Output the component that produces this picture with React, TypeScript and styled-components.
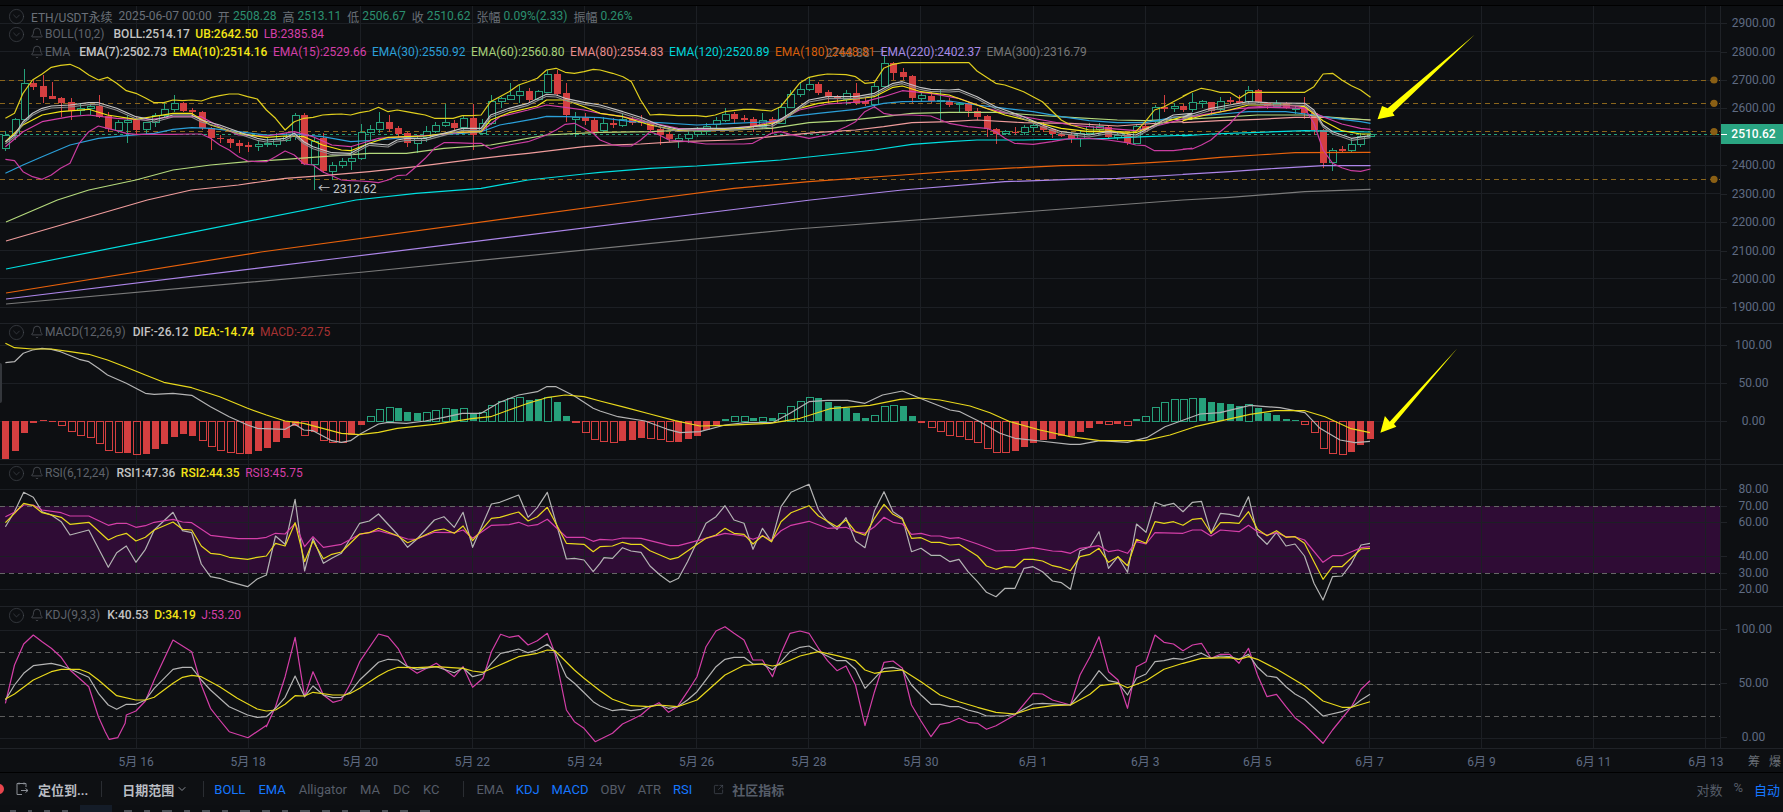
import React from "react";
import styled, { createGlobalStyle } from "styled-components";
import { Bell, ChevronDown, CircleChevronDown, SquareArrowOutUpRight } from "lucide-react";

type Pt = [number, number];
// bodyTop, bodyBottom, wickTop, wickBottom, colour - read off the chart, 3 units = 1px
type Candle = [number, number, number, number, "r" | "g"];
// bar end (3 units = 1px, zero line at 303), hollow flag
type Bar = [number, 0 | 1];

const GREEN = "#26a17b";
const RED = "#d43f40";
const BG = "#0d0f12";
const GRID = "#1c1f24";

const GlobalStyle = createGlobalStyle`
  html, body {
    margin: 0;
    padding: 0;
    background: ${BG};
    overflow: hidden;
  }
  body {
    font-family: Roboto, "Noto Sans CJK SC", sans-serif;
    font-size: 12px;
  }
`;

const Page = styled.div`
  width: 1783px;
  height: 812px;
  background: ${BG};
  overflow: hidden;
  display: flex;
  flex-direction: column;
`;

const TopEdge = styled.div`
  height: 6px;
  flex: none;
  box-sizing: border-box;
  background: #0a0b0d;
  border-bottom: 1px solid #000;
`;

const PaneRow = styled.section<{ $h: number }>`
  height: ${(p) => p.$h}px;
  flex: none;
  box-sizing: border-box;
  display: flex;
  border-bottom: 1px solid #1f2227;
`;

const ChartArea = styled.div`
  width: 1720px;
  flex: none;
  position: relative;
  overflow: hidden;
`;

const ChartSvg = styled.svg`
  display: block;
  width: 1720px;
  height: 100%;
`;

const PriceAxis = styled.div`
  flex: 1;
  position: relative;
  box-sizing: border-box;
  border-left: 1px solid #1f2227;
`;

const Tick = styled.div<{ $y: number }>`
  position: absolute;
  left: 0;
  right: 0;
  top: ${(p) => p.$y - 8}px;
  height: 16px;
  line-height: 16px;
  padding-left: 3px;
  text-align: center;
  color: #5f6b82;
  &::before {
    content: "";
    position: absolute;
    left: 0;
    top: 8px;
    width: 6px;
    height: 1px;
    background: #1f2227;
  }
`;

const LastPrice = styled.div<{ $y: number }>`
  position: absolute;
  left: 0;
  right: 0;
  top: ${(p) => p.$y - 10}px;
  height: 20px;
  line-height: 20px;
  padding-left: 3px;
  text-align: center;
  font-weight: 500;
  color: #fff;
  background: #2aa582;
  &::before {
    content: "";
    position: absolute;
    left: 0;
    top: 10px;
    width: 6px;
    height: 1px;
    background: #fff;
  }
`;

const Legend = styled.div<{ $pad: number }>`
  position: absolute;
  left: 9px;
  top: ${(p) => p.$pad}px;
  display: flex;
  flex-direction: column;
`;

const LegendRow = styled.div<{ $h: number }>`
  display: flex;
  align-items: center;
  height: ${(p) => p.$h}px;
  white-space: nowrap;
`;

const Toggle = styled.span<{ $hidden?: boolean }>`
  width: 15px;
  height: 15px;
  flex: none;
  margin-right: 7px;
  color: #474b52;
  visibility: ${(p) => (p.$hidden ? "hidden" : "visible")};
  svg {
    display: block;
    margin: -1px;
  }
`;

const BellMark = styled.span`
  width: 12px;
  height: 14px;
  flex: none;
  margin-right: 2px;
  color: #5f636b;
  svg {
    display: block;
    margin: 0 -1px;
  }
`;

const IndicatorName = styled.span<{ $gap: number }>`
  color: #5f636b;
  margin-right: ${(p) => p.$gap}px;
`;

const Value = styled.span<{ $c: string; $bold?: boolean }>`
  color: ${(p) => p.$c};
  font-weight: ${(p) => (p.$bold ? 500 : 400)};
  margin-right: 5.5px;
`;

const QuoteLabel = styled.span`
  color: #6a6f78;
  margin-right: 3px;
`;

const QuoteName = styled.span`
  color: #6a6f78;
  margin-right: 6px;
`;

const QuoteValue = styled.span`
  color: #2b8f70;
  margin-right: 6px;
`;

const PriceMark = styled.div<{ $x: number; $y: number; $c: string }>`
  position: absolute;
  left: ${(p) => p.$x}px;
  top: ${(p) => p.$y - 8}px;
  line-height: 16px;
  white-space: nowrap;
  color: ${(p) => p.$c};
`;

const PaneHandle = styled.div`
  position: absolute;
  left: 0;
  top: 39px;
  width: 2px;
  height: 40px;
  border-radius: 0 2px 2px 0;
  background: #34373c;
`;

const TimeRow = styled.div`
  height: 24px;
  flex: none;
  box-sizing: border-box;
  display: flex;
  border-bottom: 1px solid #000;
`;

const TimeScale = styled.div`
  width: 1720px;
  flex: none;
  box-sizing: border-box;
  padding-left: 80px;
  display: grid;
  grid-template-columns: repeat(15, 112.14px);
  align-items: center;
  color: #5f6b82;
  font-size: 12px;
  text-align: center;
  white-space: nowrap;
`;

const ScaleCorner = styled.div`
  flex: 1;
  display: flex;
  justify-content: flex-end;
  align-items: center;
  gap: 9px;
  padding-right: 2px;
  color: #6a6f78;
  font-size: 12px;
`;

const Toolbar = styled.div`
  height: 32px;
  flex: none;
  display: flex;
  align-items: center;
  background: #0e1013;
  font-size: 13px;
`;

const AlertDot = styled.span`
  width: 10px;
  height: 10px;
  flex: none;
  margin-left: -6px;
  margin-right: 11px;
  border-radius: 50%;
  background: #e8454d;
`;

const LocateIcon = styled.svg`
  width: 14px;
  height: 14px;
  flex: none;
  margin-right: 9px;
`;

const StrongLabel = styled.span`
  color: #b9bcc2;
  font-weight: 700;
  font-size: 13px;
`;

const RangeCaret = styled(ChevronDown)`
  flex: none;
  margin-left: 2px;
  color: #8b8f96;
`;

const Divider = styled.span<{ $l: number; $r: number }>`
  width: 1px;
  height: 16px;
  flex: none;
  margin: 0 ${(p) => p.$r}px 0 ${(p) => p.$l}px;
  background: #2a2d32;
`;

const ToolGroup = styled.div<{ $gap: number }>`
  display: flex;
  gap: ${(p) => p.$gap}px;
`;

const ToolItem = styled.span<{ $on?: boolean }>`
  color: ${(p) => (p.$on ? "#1677ff" : "#565d69")};
`;

const CommunityLink = styled.span`
  display: flex;
  align-items: center;
  gap: 8px;
  margin-left: 21px;
  color: #565d69;
  font-weight: 700;
  font-size: 13px;
`;

const ToolEnd = styled.div`
  margin-left: auto;
  display: flex;
  gap: 11px;
  padding-right: 3px;
  color: #565d69;
`;

const BottomStrip = styled.div`
  flex: 1;
  display: flex;
  align-items: flex-end;
  gap: 12px;
  padding-left: 10px;
  overflow: hidden;
`;

const Speck = styled.span<{ $on?: boolean; $w: number }>`
  width: ${(p) => p.$w}px;
  height: ${(p) => (p.$on ? 7 : 2)}px;
  flex: none;
  background: ${(p) => (p.$on ? "#141c28" : "#4a4e55")};
`;

// chart helpers
const seg = (x0: number, y0: number, sx: number, pts: Pt[]): Pt[] =>
  pts.map(([px, py]) => [x0 + px * sx, y0 + py / 3]);
const z1 = (y0: number, pts: Pt[]) => seg(0, y0, 0.3827, pts);
const z2 = (pts: Pt[]) => seg(600, 0, 0.3827, pts);
const z3 = (pts: Pt[]) => seg(1183, 0, 0.3827, pts);
const half = (y0: number, pts: Pt[]) => seg(600, y0, 0.5, pts);
const low = (pts: Pt[]) => seg(0, 710, 0.574, pts);
const toPoints = (pts: Pt[]) => pts.map(([x, y]) => `${x.toFixed(1)},${y.toFixed(1)}`).join(" ");
const candleX = (i: number) => 5.4 + 9.345 * i;

const GRID_X = Array.from({ length: 15 }, (_, k) => 136 + 112.14 * k);
const TIME_LABELS = ["5月 16", "5月 18", "5月 20", "5月 22", "5月 24", "5月 26", "5月 28", "5月 30", "6月 1", "6月 3", "6月 5", "6月 7", "6月 9", "6月 11", "6月 13"];

const CANDLES: Candle[] = [
  [405, 445, 392, 452, "g"], [358, 405, 355, 420, "g"], [250, 358, 208, 358, "g"], [250, 260, 240, 270, "r"],
  [258, 290, 225, 310, "r"], [288, 296, 245, 298, "r"], [295, 310, 290, 350, "r"], [307, 332, 295, 360, "r"],
  [325, 332, 310, 345, "g"], [320, 325, 315, 345, "g"], [318, 350, 285, 355, "r"], [348, 388, 335, 395, "r"],
  [367, 390, 360, 398, "g"], [360, 367, 345, 430, "g"], [360, 390, 350, 405, "r"], [368, 388, 365, 405, "g"],
  [345, 368, 340, 380, "g"], [327, 345, 305, 350, "g"], [310, 327, 285, 335, "g"], [310, 332, 305, 335, "r"],
  [330, 337, 325, 350, "r"], [335, 383, 333, 390, "r"], [383, 415, 380, 450, "r"], [413, 418, 405, 430, "r"],
  [418, 430, 415, 445, "r"], [428, 437, 420, 458, "r"], [435, 440, 425, 455, "r"], [432, 438, 420, 452, "g"],
  [429, 433, 415, 440, "g"], [418, 432, 400, 440, "g"], [410, 420, 400, 425, "g"], [346, 410, 338, 420, "g"],
  [345, 493, 340, 495, "r"], [425, 493, 415, 570, "g"], [415, 513, 400, 520, "r"], [497, 513, 485, 540, "g"],
  [484, 497, 475, 505, "g"], [475, 484, 440, 510, "g"], [398, 475, 372, 480, "g"], [388, 397, 375, 420, "g"],
  [367, 388, 335, 400, "g"], [367, 388, 345, 395, "r"], [384, 402, 378, 415, "r"], [400, 430, 395, 440, "r"],
  [415, 430, 405, 460, "g"], [395, 412, 378, 425, "g"], [375, 395, 365, 400, "g"], [368, 375, 312, 380, "g"],
  [369, 384, 360, 390, "r"], [355, 382, 345, 395, "g"], [354, 405, 313, 450, "r"], [370, 400, 358, 405, "g"],
  [305, 370, 285, 375, "g"], [295, 305, 290, 325, "g"], [287, 298, 250, 300, "g"], [273, 287, 255, 310, "g"],
  [273, 300, 265, 305, "r"], [275, 298, 270, 300, "g"], [222, 277, 210, 280, "g"], [222, 282, 210, 285, "r"],
  [280, 345, 250, 365, "r"], [353, 358, 335, 410, "g"], [352, 362, 340, 375, "r"], [360, 395, 350, 405, "r"],
  [370, 392, 350, 395, "g"], [368, 375, 355, 385, "r"], [358, 375, 340, 380, "g"], [358, 370, 350, 375, "r"],
  [362, 370, 345, 378, "r"], [368, 390, 362, 400, "r"], [388, 405, 380, 435, "r"], [403, 418, 395, 425, "r"],
  [415, 420, 405, 445, "g"], [403, 415, 390, 430, "g"], [393, 403, 380, 410, "g"], [380, 393, 370, 405, "g"],
  [362, 372, 350, 385, "g"], [343, 362, 325, 365, "g"], [343, 358, 335, 370, "r"], [353, 360, 345, 365, "r"],
  [358, 380, 350, 395, "r"], [360, 380, 340, 385, "g"], [358, 370, 350, 400, "r"], [323, 370, 308, 372, "g"],
  [283, 323, 270, 325, "g"], [268, 283, 250, 290, "g"], [253, 268, 232, 272, "g"], [253, 278, 245, 285, "r"],
  [277, 292, 270, 308, "r"], [290, 298, 285, 310, "r"], [280, 297, 270, 315, "g"], [280, 308, 250, 315, "r"],
  [303, 313, 295, 318, "r"], [260, 313, 250, 325, "g"], [190, 260, 165, 262, "g"], [190, 218, 185, 240, "r"],
  [217, 232, 205, 240, "r"], [228, 293, 225, 310, "r"], [287, 294, 275, 305, "g"], [287, 303, 275, 310, "r"],
  [300, 303, 270, 365, "g"], [303, 315, 295, 320, "r"], [310, 313, 305, 335, "g"], [310, 333, 305, 350, "r"],
  [332, 350, 325, 360, "r"], [348, 388, 345, 410, "r"], [388, 403, 385, 432, "r"], [395, 400, 390, 405, "g"],
  [395, 397, 380, 405, "r"], [382, 397, 375, 405, "g"], [377, 382, 370, 395, "g"], [378, 390, 365, 395, "r"],
  [388, 403, 385, 415, "r"], [402, 407, 395, 410, "r"], [405, 415, 400, 430, "r"], [400, 415, 390, 440, "g"],
  [378, 400, 370, 405, "g"], [378, 388, 370, 395, "g"], [380, 412, 375, 415, "r"], [405, 412, 395, 420, "g"],
  [405, 430, 400, 435, "r"], [378, 430, 372, 432, "g"], [378, 390, 360, 395, "r"], [323, 365, 315, 370, "g"],
  [320, 328, 285, 335, "r"], [320, 325, 310, 335, "g"], [318, 329, 312, 335, "r"], [308, 328, 280, 335, "g"],
  [305, 310, 300, 325, "g"], [307, 332, 305, 345, "r"], [305, 328, 292, 335, "g"], [300, 305, 290, 312, "r"],
  [304, 310, 285, 312, "r"], [271, 305, 258, 310, "g"], [271, 305, 268, 310, "r"], [308, 318, 305, 328, "r"],
  [310, 318, 300, 325, "g"], [310, 325, 305, 328, "r"], [325, 328, 318, 342, "g"], [322, 340, 292, 358, "r"],
  [340, 390, 335, 405, "r"], [390, 488, 388, 503, "r"], [452, 488, 445, 512, "g"], [447, 452, 438, 455, "r"],
  [433, 452, 418, 455, "g"], [410, 433, 400, 440, "g"], [403, 408, 398, 410, "g"],
];

const MACD_BARS: Bar[] = [
  [418, 0], [392, 0], [338, 0], [308, 0], [300, 0], [307, 0], [316, 1], [334, 1], [346, 1], [352, 1], [370, 1], [392, 1],
  [397, 1], [398, 0], [403, 1], [401, 0], [386, 0], [371, 0], [352, 0], [342, 0], [348, 0], [361, 1], [380, 1], [392, 1],
  [397, 1], [401, 1], [401, 0], [392, 0], [383, 0], [365, 0], [353, 0], [318, 0], [347, 1], [337, 0], [361, 1], [368, 1],
  [368, 1], [345, 0], [315, 0], [290, 1], [268, 1], [262, 1], [264, 0], [276, 0], [279, 0], [277, 1], [271, 1], [265, 1],
  [267, 0], [265, 1], [278, 0], [278, 1], [256, 1], [245, 1], [235, 1], [232, 1], [240, 0], [238, 0], [232, 1], [245, 0],
  [288, 0], [307, 1], [337, 1], [358, 1], [365, 1], [368, 1], [362, 0], [359, 0], [353, 0], [356, 1], [358, 1], [365, 1],
  [365, 0], [358, 0], [347, 0], [330, 0], [315, 0], [298, 0], [290, 1], [290, 1], [295, 0], [293, 1], [295, 0], [281, 1],
  [260, 1], [244, 1], [232, 1], [234, 0], [246, 0], [258, 0], [263, 0], [279, 0], [294, 0], [287, 1], [260, 1], [256, 1],
  [258, 0], [288, 0], [308, 0], [322, 1], [334, 1], [346, 1], [350, 1], [358, 1], [368, 1], [386, 1], [398, 1], [398, 1],
  [393, 0], [380, 0], [368, 0], [360, 0], [356, 0], [349, 0], [347, 0], [335, 0], [323, 0], [311, 0], [314, 1], [311, 0],
  [316, 1], [298, 0], [290, 1], [262, 1], [247, 1], [238, 1], [238, 1], [235, 1], [234, 0], [246, 0], [250, 0], [253, 0],
  [258, 0], [253, 1], [264, 0], [279, 0], [286, 0], [298, 0], [300, 0], [313, 1], [338, 1], [386, 1], [400, 1], [404, 1],
  [396, 0], [374, 0], [356, 0],
];

const UB: Pt[] = [
  ...z1(0, [[14, 355], [38, 340], [60, 280], [85, 240], [110, 222], [134, 202], [158, 196], [183, 193], [207, 205], [232, 225], [257, 240], [281, 232], [305, 250], [330, 272], [355, 280], [379, 293], [403, 308], [428, 308], [452, 300], [477, 302], [501, 300], [526, 303], [550, 293], [574, 287], [599, 282], [623, 282], [647, 290], [672, 297], [696, 330], [720, 355], [745, 390], [769, 365], [794, 355], [818, 352], [843, 345], [867, 343], [892, 342], [916, 345], [940, 338], [965, 333], [989, 322], [1014, 335], [1038, 330], [1062, 335], [1087, 340], [1111, 345], [1135, 355], [1160, 355], [1184, 355], [1208, 347], [1233, 347], [1257, 345], [1282, 305], [1306, 290], [1330, 275], [1355, 255], [1380, 245], [1404, 235], [1428, 210], [1453, 205], [1477, 217], [1501, 220], [1526, 215], [1550, 208], [1568, 210]]),
  ...z2([[33, 220], [60, 230], [82, 245], [106, 300], [131, 345], [155, 343], [204, 347], [253, 347], [277, 350], [301, 345], [326, 335], [375, 328], [399, 328], [448, 333], [472, 320], [497, 285], [521, 250], [546, 232], [570, 226], [594, 222], [643, 224], [668, 230], [692, 250], [717, 247], [741, 205], [766, 193], [790, 188], [964, 188], [985, 213], [1034, 250], [1058, 255], [1107, 275], [1156, 305], [1205, 360], [1230, 375], [1278, 390], [1327, 390], [1376, 400], [1400, 395], [1425, 365], [1449, 330], [1474, 320], [1498, 305], [1523, 290], [1547, 275]]),
  ...z3([[0, 288], [24, 275], [48, 265], [73, 270], [97, 277], [122, 277], [147, 295], [171, 277], [195, 277], [318, 277], [342, 260], [366, 222], [391, 220], [415, 240], [440, 257], [464, 270], [490, 292]]),
];

const LB: Pt[] = [
  ...z1(0, [[14, 478], [38, 482], [60, 515], [85, 530], [110, 538], [134, 525], [158, 505], [183, 490], [207, 430], [232, 395], [257, 378], [281, 385], [305, 392], [330, 400], [355, 403], [403, 403], [452, 403], [500, 402], [526, 402], [550, 415], [574, 435], [599, 450], [623, 470], [647, 483], [672, 485], [696, 485], [720, 470], [745, 453], [769, 465], [794, 492], [818, 495], [843, 515], [867, 527], [892, 540], [916, 542], [940, 543], [965, 545], [989, 548], [1014, 540], [1038, 527], [1062, 525], [1087, 500], [1111, 475], [1135, 445], [1160, 428], [1184, 428], [1233, 430], [1257, 430], [1282, 447], [1306, 440], [1330, 435], [1380, 425], [1428, 405], [1453, 390], [1477, 373], [1501, 370], [1526, 385], [1550, 400], [1568, 420]]),
  ...z2([[33, 435], [57, 438], [82, 438], [106, 420], [131, 395], [155, 405], [180, 420], [228, 425], [277, 432], [326, 432], [375, 432], [399, 430], [424, 415], [448, 400], [472, 395], [497, 403], [546, 415], [594, 405], [643, 380], [668, 365], [692, 335], [717, 320], [741, 340], [766, 345], [815, 345], [864, 348], [912, 370], [961, 380], [1010, 385], [1034, 395], [1058, 415], [1083, 430], [1132, 433], [1181, 425], [1230, 415], [1278, 415], [1327, 420], [1376, 428], [1400, 435], [1425, 437], [1449, 452], [1498, 452], [1547, 445]]),
  ...z3([[0, 447], [24, 447], [48, 435], [73, 420], [97, 395], [122, 372], [147, 340], [171, 322], [220, 318], [293, 318], [318, 325], [342, 370], [366, 450], [391, 490], [415, 503], [440, 512], [464, 514], [490, 507]]),
];

const EMA7: Pt[] = [
  ...z1(0, [[14, 425], [38, 405], [60, 365], [85, 340], [110, 325], [134, 318], [183, 315], [232, 308], [257, 308], [305, 325], [355, 350], [403, 360], [452, 345], [500, 345], [526, 360], [574, 375], [623, 395], [672, 415], [696, 420], [745, 415], [769, 400], [794, 425], [818, 440], [867, 458], [916, 460], [940, 445], [965, 430], [1014, 435], [1038, 420], [1062, 415], [1111, 415], [1160, 400], [1208, 385], [1257, 385], [1282, 345], [1330, 325], [1380, 310], [1428, 283], [1453, 285], [1477, 295], [1526, 307], [1568, 315]]),
  ...z2([[60, 335], [106, 352], [155, 375], [204, 388], [253, 385], [326, 385], [399, 380], [448, 375], [497, 340], [546, 300], [594, 290], [668, 290], [717, 280], [766, 250], [790, 245], [839, 263], [864, 268], [912, 270], [937, 268], [985, 290], [1034, 320], [1107, 350], [1156, 375], [1205, 395], [1278, 405], [1327, 395], [1400, 405], [1449, 375], [1498, 345], [1547, 340]]),
  ...z3([[0, 352], [24, 342], [73, 325], [122, 315], [171, 305], [220, 308], [318, 310], [342, 330], [366, 375], [391, 395], [440, 415], [490, 407]]),
];

const EMA10: Pt[] = [
  ...z1(0, [[14, 425], [60, 375], [110, 345], [158, 335], [232, 328], [281, 345], [355, 358], [452, 340], [500, 340], [550, 375], [623, 400], [696, 412], [745, 408], [794, 410], [843, 435], [892, 450], [916, 452], [965, 430], [1014, 412], [1062, 410], [1111, 408], [1184, 397], [1257, 395], [1282, 360], [1330, 338], [1404, 318], [1428, 300], [1477, 300], [1526, 320], [1568, 340]]),
  ...z2([[60, 350], [131, 375], [204, 392], [277, 392], [375, 385], [472, 365], [521, 325], [570, 310], [643, 300], [717, 290], [766, 262], [790, 258], [839, 275], [912, 285], [985, 315], [1058, 345], [1132, 365], [1205, 385], [1278, 395], [1352, 395], [1400, 398], [1449, 375], [1523, 350], [1547, 352]]),
  ...z3([[0, 362], [48, 348], [122, 330], [171, 315], [268, 315], [318, 320], [366, 362], [415, 392], [464, 402], [490, 402]]),
];

const EMA15: Pt[] = [
  ...z1(0, [[14, 440], [60, 395], [110, 365], [183, 350], [232, 345], [305, 355], [380, 360], [452, 350], [526, 350], [574, 380], [623, 405], [696, 408], [769, 395], [818, 410], [867, 435], [916, 440], [989, 415], [1062, 410], [1135, 405], [1208, 397], [1257, 395], [1306, 350], [1380, 330], [1428, 315], [1477, 322], [1526, 330], [1568, 340]]),
  ...z2([[60, 350], [131, 368], [204, 385], [301, 390], [399, 378], [472, 360], [521, 330], [594, 312], [692, 305], [741, 290], [790, 272], [864, 280], [937, 295], [1010, 325], [1083, 345], [1156, 360], [1230, 375], [1327, 385], [1400, 392], [1474, 372], [1547, 350]]),
  ...z3([[0, 355], [73, 340], [147, 325], [220, 322], [318, 325], [366, 350], [415, 372], [464, 385], [490, 388]]),
];

const EMA30: Pt[] = [
  ...z1(0, [[14, 520], [60, 495], [110, 470], [183, 435], [257, 415], [330, 407], [403, 400], [452, 388], [501, 383], [550, 385], [623, 395], [696, 405], [769, 402], [843, 410], [916, 425], [989, 420], [1062, 412], [1135, 405], [1208, 400], [1257, 395], [1306, 375], [1404, 355], [1428, 349], [1477, 350], [1568, 353]]),
  ...z2([[82, 365], [155, 368], [253, 375], [350, 370], [448, 365], [497, 350], [570, 340], [668, 328], [741, 310], [790, 305], [912, 303], [985, 315], [1058, 325], [1132, 335], [1205, 350], [1278, 362], [1352, 368], [1425, 368], [1498, 352], [1547, 347]]),
  ...z3([[0, 350], [73, 345], [171, 335], [268, 335], [342, 345], [415, 358], [464, 365], [490, 370]]),
];

const EMA60: Pt[] = [
  [6, 222],
  ...z1(0, [[150, 600], [232, 570], [355, 540], [452, 510], [550, 495], [647, 485], [745, 478], [843, 470], [965, 460], [1062, 460], [1160, 445], [1282, 435], [1428, 405], [1550, 398], [1568, 397]]),
  ...z2([[131, 395], [228, 390], [350, 390], [448, 385], [546, 368], [643, 362], [741, 350], [815, 340], [912, 337], [1034, 337], [1132, 345], [1230, 352], [1352, 360], [1425, 362], [1498, 358], [1547, 358]]),
  ...z3([[0, 358], [97, 352], [195, 345], [318, 345], [391, 352], [490, 360]]),
];

const EMA80: Pt[] = [
  [6, 241],
  ...z1(0, [[385, 600], [500, 570], [623, 555], [745, 535], [843, 527], [965, 515], [1087, 500], [1257, 475], [1380, 460], [1526, 440], [1568, 436]]),
  ...z2([[106, 432], [204, 425], [350, 420], [448, 410], [570, 397], [668, 390], [741, 380], [815, 368], [912, 365], [985, 360], [1107, 368], [1230, 370], [1352, 378], [1425, 372], [1523, 365]]),
  ...z3([[0, 368], [97, 362], [195, 358], [293, 352], [366, 352], [490, 360]]),
];

const EMA120: Pt[] = [
  [6, 269],
  ...z1(0, [[930, 600], [1087, 580], [1257, 565], [1380, 540], [1526, 522], [1568, 517]]),
  ...z2([[131, 505], [253, 498], [350, 490], [472, 480], [594, 465], [717, 450], [815, 433], [912, 425], [985, 420], [1107, 420], [1230, 417], [1327, 415], [1425, 410], [1547, 405]]),
  ...z3([[0, 408], [73, 402], [195, 397], [318, 392], [490, 396]]),
];

const EMA180: Pt[] = [
  [6, 293], [261, 252],
  ...z2([[115, 600], [350, 565], [546, 545], [790, 525], [912, 515], [1058, 505], [1205, 497], [1327, 495], [1449, 487], [1547, 480]]),
  ...z3([[0, 482], [97, 472], [195, 465], [293, 458], [490, 457]]),
];

const EMA220: Pt[] = [
  [6, 299], [341, 258],
  ...z2([[550, 600], [790, 570], [1058, 545], [1230, 538], [1352, 535], [1547, 522]]),
  ...z3([[0, 523], [122, 515], [244, 505], [366, 497], [490, 497]]),
];

const EMA300: Pt[] = [
  [6, 304], [364, 272], [796, 229],
  ...z3([[0, 600], [122, 592], [318, 575], [490, 568]]),
];

const DIF: Pt[] = [
  ...z1(320, [[14, 128], [38, 125], [61, 100], [85, 90], [110, 85], [134, 88], [158, 95], [207, 118], [232, 125], [257, 145], [281, 165], [330, 190], [380, 220], [403, 223], [452, 220], [501, 226], [550, 260], [599, 290], [647, 315], [672, 325], [745, 328], [769, 312], [794, 330], [818, 332], [867, 362], [892, 367], [916, 362], [940, 343], [989, 312], [1014, 307], [1062, 310], [1111, 303], [1160, 292], [1208, 280], [1257, 280], [1306, 247], [1355, 225], [1404, 215], [1428, 200], [1453, 200], [1501, 228], [1550, 265]]),
  ...half(320, [[0, 273], [36, 290], [90, 303], [135, 328], [160, 338], [200, 335], [250, 315], [290, 308], [345, 308], [380, 280], [418, 245], [455, 241], [495, 241], [530, 250], [565, 225], [605, 213], [640, 235], [700, 270], [720, 275], [760, 305], [800, 340], [830, 355], [880, 363], [940, 373], [960, 373], [1000, 362], [1055, 367], [1095, 352], [1130, 320], [1200, 282], [1240, 278], [1300, 256], [1360, 263], [1410, 278], [1440, 325], [1480, 360], [1510, 368], [1540, 364]]),
];

const DEA: Pt[] = [
  ...z1(320, [[14, 70], [38, 83], [85, 87], [134, 87], [183, 95], [232, 103], [281, 120], [330, 142], [380, 165], [428, 187], [501, 203], [574, 230], [647, 265], [696, 285], [745, 303], [794, 310], [843, 325], [892, 340], [940, 344], [989, 337], [1038, 325], [1135, 313], [1232, 296], [1282, 290], [1330, 270], [1380, 250], [1428, 233], [1477, 225], [1526, 230]]),
  ...half(320, [[0, 243], [50, 262], [100, 282], [150, 302], [200, 318], [250, 316], [340, 310], [400, 295], [460, 266], [540, 256], [600, 238], [640, 234], [680, 240], [740, 258], [780, 278], [820, 305], [880, 330], [940, 350], [1000, 362], [1090, 362], [1140, 345], [1190, 320], [1300, 283], [1350, 272], [1410, 272], [1450, 290], [1500, 325], [1540, 338]]),
];

const RSI1: Pt[] = [
  ...z1(460, [[14, 200], [38, 155], [62, 97], [87, 112], [110, 155], [134, 165], [160, 185], [183, 225], [232, 210], [283, 322], [305, 278], [330, 258], [355, 307], [380, 268], [403, 210], [452, 157], [477, 212], [501, 218], [526, 312], [550, 350], [574, 355], [599, 365], [647, 380], [672, 357], [696, 345], [720, 228], [745, 253], [771, 118], [796, 333], [818, 235], [845, 310], [867, 295], [892, 280], [940, 190], [965, 183], [989, 162], [1040, 225], [1065, 262], [1087, 240], [1135, 180], [1160, 170], [1187, 202], [1210, 157], [1235, 262], [1284, 132], [1306, 127], [1355, 105], [1380, 172], [1404, 143], [1430, 97], [1480, 297], [1501, 295], [1526, 300], [1550, 335]]),
  ...half(480, [[0, 250], [8, 233], [25, 235], [45, 203], [62, 213], [82, 217], [100, 258], [120, 285], [140, 307], [157, 295], [175, 245], [212, 130], [232, 110], [250, 77], [268, 120], [288, 130], [306, 208], [325, 145], [343, 185], [362, 80], [382, 37], [418, 13], [437, 90], [455, 125], [474, 148], [492, 113], [511, 183], [530, 203], [549, 92], [568, 35], [586, 95], [605, 115], [623, 215], [642, 205], [662, 226], [680, 226], [700, 245], [718, 238], [736, 275], [755, 305], [773, 337], [792, 350], [810, 325], [830, 325], [848, 265], [866, 260], [885, 275], [905, 303], [923, 308], [941, 328], [960, 212], [980, 200], [998, 155], [1017, 265], [1036, 230], [1055, 277], [1073, 132], [1092, 157], [1110, 67], [1128, 77], [1147, 70], [1166, 95], [1185, 67], [1203, 64], [1222, 160], [1241, 100], [1259, 103], [1278, 110], [1297, 50], [1315, 165], [1334, 193], [1353, 157], [1372, 198], [1390, 192], [1409, 228], [1428, 310], [1446, 360], [1465, 290], [1484, 288], [1503, 250], [1522, 195], [1540, 190]]),
];

const RSI2: Pt[] = [
  ...z1(460, [[14, 188], [38, 160], [62, 130], [87, 137], [110, 158], [160, 172], [183, 193], [232, 187], [283, 240], [305, 228], [330, 220], [355, 243], [380, 232], [403, 210], [452, 186], [477, 208], [501, 210], [526, 258], [550, 280], [574, 283], [599, 292], [647, 298], [672, 292], [696, 288], [720, 250], [745, 258], [771, 188], [796, 305], [818, 243], [845, 296], [867, 283], [892, 276], [940, 222], [965, 218], [989, 205], [1040, 228], [1065, 248], [1087, 238], [1135, 212], [1160, 207], [1187, 220], [1210, 198], [1235, 242], [1284, 175], [1306, 172], [1355, 156], [1380, 183], [1404, 170], [1430, 142], [1480, 250], [1526, 253], [1550, 275]]),
  ...half(480, [[0, 200], [25, 198], [45, 187], [62, 193], [82, 193], [100, 212], [140, 238], [157, 232], [212, 175], [232, 165], [250, 145], [268, 160], [288, 163], [306, 192], [325, 167], [343, 185], [362, 125], [382, 98], [418, 77], [437, 108], [474, 140], [492, 120], [511, 155], [530, 166], [549, 115], [568, 73], [586, 103], [605, 118], [623, 175], [642, 173], [662, 187], [680, 187], [700, 195], [718, 193], [755, 228], [773, 258], [792, 268], [810, 260], [830, 262], [848, 238], [866, 238], [885, 243], [905, 257], [923, 263], [941, 272], [960, 230], [980, 223], [998, 205], [1017, 247], [1036, 230], [1055, 257], [1073, 178], [1092, 190], [1110, 125], [1128, 130], [1147, 125], [1166, 136], [1185, 118], [1203, 115], [1222, 160], [1241, 128], [1259, 128], [1278, 130], [1297, 95], [1315, 148], [1334, 167], [1353, 152], [1372, 172], [1390, 170], [1409, 190], [1446, 298], [1465, 260], [1484, 260], [1522, 207], [1540, 205]]),
];

const RSI3: Pt[] = [
  ...z1(460, [[14, 170], [38, 157], [62, 135], [87, 135], [110, 150], [160, 158], [183, 168], [232, 168], [283, 196], [305, 190], [330, 190], [355, 202], [380, 197], [403, 187], [452, 178], [477, 186], [501, 188], [550, 226], [599, 233], [623, 236], [672, 236], [696, 232], [720, 220], [745, 222], [771, 190], [796, 260], [818, 230], [845, 262], [892, 253], [940, 223], [989, 212], [1040, 228], [1065, 237], [1087, 238], [1135, 217], [1187, 218], [1210, 210], [1235, 235], [1284, 196], [1330, 194], [1355, 187], [1380, 198], [1404, 194], [1430, 178], [1480, 232], [1526, 232], [1550, 244]]),
  ...half(480, [[0, 178], [25, 180], [45, 174], [82, 175], [140, 197], [157, 197], [212, 175], [250, 160], [288, 168], [306, 178], [325, 167], [343, 180], [362, 152], [382, 136], [418, 124], [455, 145], [492, 142], [511, 155], [530, 160], [549, 140], [568, 112], [586, 127], [605, 132], [623, 163], [642, 160], [662, 168], [680, 168], [700, 175], [718, 173], [755, 192], [792, 213], [830, 211], [866, 203], [905, 213], [923, 214], [941, 220], [960, 205], [998, 197], [1017, 215], [1036, 210], [1055, 220], [1073, 185], [1092, 192], [1110, 158], [1166, 160], [1185, 150], [1203, 150], [1222, 168], [1241, 150], [1278, 155], [1297, 136], [1315, 155], [1334, 165], [1353, 158], [1372, 170], [1390, 170], [1409, 180], [1446, 247], [1465, 227], [1484, 227], [1522, 203], [1540, 200]]),
];

const KDJ_J: Pt[] = [
  ...z1(600, [[14, 310], [38, 195], [62, 132], [87, 105], [110, 125], [134, 145], [160, 172], [183, 210], [232, 260], [257, 350], [275, 395]]),
  ...low([[190, 88], [205, 83], [218, 40]]),
  ...z1(600, [[330, 345], [355, 333], [380, 303], [403, 240], [452, 120], [501, 155], [526, 255], [550, 325], [574, 360], [599, 395]]),
  ...low([[432, 83], [465, 45]]),
  ...z1(600, [[696, 380], [720, 320], [745, 230], [771, 112], [796, 290], [818, 215], [845, 285], [870, 307], [892, 300], [916, 250], [940, 185], [989, 102], [1014, 110], [1040, 145], [1065, 200], [1090, 220], [1140, 190], [1187, 230], [1210, 200], [1235, 262], [1262, 235], [1284, 155], [1308, 103], [1330, 112], [1355, 107], [1380, 135], [1404, 122], [1430, 100], [1450, 160], [1480, 330], [1501, 365], [1526, 385]]),
  ...low([[1037, 95]]),
  ...half(620, [[25, 340], [45, 312], [62, 300], [82, 285], [100, 262], [118, 248], [137, 277], [155, 260], [175, 215], [194, 170], [212, 80], [232, 33], [250, 20], [268, 40], [288, 60], [306, 120], [325, 120], [345, 170], [362, 100], [380, 40], [400, 33], [418, 40], [437, 85], [455, 122], [474, 152], [492, 138], [511, 195], [530, 317], [549, 215], [568, 127], [586, 123], [605, 145], [623, 255], [642, 303], [662, 350], [680, 313], [700, 307], [718, 295], [736, 307], [755, 310], [773, 328], [792, 317], [830, 285], [866, 220], [885, 222], [905, 240], [941, 255], [960, 165], [980, 110], [998, 50], [1017, 155], [1036, 180], [1055, 265], [1073, 140], [1092, 125], [1110, 45], [1128, 67], [1147, 72], [1166, 92], [1185, 75], [1203, 70], [1222, 115], [1241, 103], [1259, 103], [1278, 130], [1297, 85], [1315, 165], [1334, 230], [1353, 223], [1372, 260], [1390, 293], [1409, 315], [1446, 370], [1465, 330], [1503, 260], [1522, 208], [1540, 182]]),
];

const KDJ_K: Pt[] = [
  ...z1(600, [[14, 300], [38, 255], [62, 220], [87, 197], [134, 190], [160, 197], [183, 207], [232, 232], [257, 280], [283, 315], [305, 328], [330, 313], [355, 313], [380, 300], [403, 265], [452, 208], [477, 202], [501, 202], [526, 240], [550, 270], [599, 320], [647, 345], [672, 352], [696, 350], [720, 325], [745, 292], [771, 228], [796, 290], [818, 258], [845, 285], [870, 293], [892, 292], [916, 275], [940, 240], [989, 187], [1014, 178], [1040, 180], [1065, 200], [1090, 208], [1140, 200], [1187, 218], [1210, 203], [1235, 230], [1262, 222], [1284, 190], [1308, 160], [1330, 155], [1355, 147], [1380, 158], [1404, 150], [1430, 133], [1450, 155], [1480, 230], [1501, 250], [1530, 282], [1550, 305]]),
  ...half(620, [[0, 258], [25, 272], [45, 268], [62, 272], [82, 268], [100, 258], [118, 255], [137, 265], [155, 260], [175, 240], [194, 215], [232, 140], [250, 118], [268, 112], [288, 112], [306, 132], [325, 132], [345, 150], [362, 125], [380, 95], [400, 82], [418, 78], [437, 95], [474, 122], [492, 122], [511, 148], [530, 205], [549, 175], [568, 145], [586, 142], [605, 150], [623, 195], [642, 225], [662, 253], [680, 253], [700, 260], [718, 260], [736, 270], [755, 277], [773, 288], [810, 288], [830, 282], [866, 252], [885, 250], [941, 255], [960, 220], [980, 190], [998, 152], [1017, 182], [1036, 188], [1055, 225], [1073, 175], [1092, 162], [1110, 125], [1128, 122], [1147, 115], [1166, 118], [1203, 100], [1222, 115], [1241, 108], [1259, 110], [1278, 118], [1297, 103], [1315, 142], [1334, 168], [1353, 172], [1372, 200], [1390, 222], [1409, 238], [1446, 288], [1484, 275], [1503, 262], [1522, 240], [1540, 223]]),
];

const KDJ_D: Pt[] = [
  ...z1(600, [[14, 297], [38, 282], [87, 240], [134, 215], [160, 208], [207, 208], [232, 218], [257, 240], [305, 287], [355, 300], [380, 300], [403, 292], [452, 250], [477, 232], [501, 226], [526, 230], [574, 260], [620, 295], [672, 327], [696, 333], [720, 330], [745, 313], [771, 287], [796, 288], [818, 277], [870, 285], [900, 285], [916, 280], [940, 265], [989, 228], [1014, 212], [1040, 202], [1090, 203], [1140, 200], [1210, 205], [1235, 213], [1262, 217], [1306, 195], [1355, 170], [1404, 160], [1430, 150], [1450, 152], [1501, 210], [1526, 235]]),
  ...half(620, [[0, 212], [25, 238], [62, 257], [100, 260], [118, 255], [155, 260], [194, 240], [250, 165], [288, 136], [325, 132], [345, 138], [362, 133], [400, 108], [437, 95], [474, 107], [511, 122], [530, 150], [549, 160], [568, 155], [605, 150], [642, 185], [680, 225], [718, 245], [755, 262], [792, 277], [830, 282], [866, 265], [905, 257], [941, 255], [980, 223], [1000, 197], [1036, 190], [1055, 203], [1092, 182], [1128, 148], [1166, 130], [1203, 115], [1259, 113], [1278, 118], [1297, 110], [1315, 118], [1353, 147], [1409, 197], [1446, 243], [1484, 262], [1503, 262], [1540, 245]]),
];

const MAIN_TICKS = ["2900.00", "2800.00", "2700.00", "2600.00", "", "2400.00", "2300.00", "2200.00", "2100.00", "2000.00", "1900.00"];
const MAIN_GRID_Y = MAIN_TICKS.map((_, i) => 23.3 + 28.4 * i);
const LEVELS = [80, 103.3, 131.7, 179.3];

const Series = ({ pts, c, w = 1.2 }: { pts: Pt[]; c: string; w?: number }) => (
  <polyline points={toPoints(pts)} fill="none" stroke={c} strokeWidth={w} strokeLinejoin="round" />
);

const Grid = ({ top, bottom, ys }: { top: number; bottom: number; ys: number[] }) => (
  <g stroke={GRID} strokeWidth="1" shapeRendering="crispEdges">
    {GRID_X.map((x) => (
      <line key={x} x1={x} x2={x} y1={top} y2={bottom} />
    ))}
    <line x1={1720} x2={1720} y1={top} y2={bottom} />
    {ys.map((y) => (
      <line key={y} x1={0} x2={1720} y1={y} y2={y} />
    ))}
  </g>
);

const Dashes = ({ ys, c, dash = "5 4" }: { ys: number[]; c: string; dash?: string }) => (
  <g stroke={c} strokeWidth="1" strokeDasharray={dash} shapeRendering="crispEdges">
    {ys.map((y) => (
      <line key={y} x1={0} x2={1720} y1={y} y2={y} />
    ))}
  </g>
);

const Candles = () => (
  <g shapeRendering="crispEdges">
    {CANDLES.map(([t, b, wt, wb, dir], i) => {
      const x = Math.round(candleX(i));
      const c = dir === "r" ? RED : GREEN;
      return (
        <g key={i}>
          <line x1={x + 0.5} x2={x + 0.5} y1={wt / 3} y2={wb / 3} stroke={c} />
          <rect
            x={x - 3}
            y={t / 3}
            width={7}
            height={Math.max((b - t) / 3, 1)}
            fill={dir === "r" ? RED : BG}
            stroke={dir === "r" ? "none" : c}
          />
        </g>
      );
    })}
  </g>
);

const MacdBars = () => (
  <g shapeRendering="crispEdges">
    {MACD_BARS.map(([end, hollow], i) => {
      const x = Math.round(candleX(i)) - 3;
      const c = i >= 39 && i <= 60 ? GREEN : i >= 77 && i <= 97 ? GREEN : i >= 121 && i <= 138 ? GREEN : RED;
      const y0 = 320 + Math.min(end, 303) / 3;
      const h = Math.max(Math.abs(end - 303) / 3, 1);
      return <rect key={i} x={x} y={y0} width={7} height={h} fill={hollow ? "none" : c} stroke={hollow ? c : "none"} />;
    })}
  </g>
);

// yellow annotation arrows drawn on top of the chart
const Arrow = ({ points }: { points: string }) => <polygon points={points} fill="#ffff00" />;

const Toggler = ({ hidden }: { hidden?: boolean }) => (
  <Toggle $hidden={hidden}>
    <CircleChevronDown size={17} strokeWidth={0.9} />
  </Toggle>
);

const BellIcon = () => (
  <BellMark>
    <Bell size={14} strokeWidth={1.1} />
  </BellMark>
);

const IndicatorLegend = ({
  name,
  values,
  hidden,
  gap = 7,
}: {
  name: string;
  values: [string, string, boolean?][];
  hidden?: boolean;
  gap?: number;
}) => (
  <LegendRow $h={18}>
    <Toggler hidden={hidden} />
    <BellIcon />
    <IndicatorName $gap={gap}>{name}</IndicatorName>
    {values.map(([text, c, bold]) => (
      <Value key={text} $c={c} $bold={bold}>
        {text}
      </Value>
    ))}
  </LegendRow>
);

const App = () => (
  <Page>
    <GlobalStyle />
    <TopEdge />

    <PaneRow $h={318}>
      <ChartArea>
        <ChartSvg viewBox="0 6 1720 317" preserveAspectRatio="none">
          <Grid top={6} bottom={323} ys={MAIN_GRID_Y} />
          <Dashes ys={LEVELS} c="#8a651c" />
          <Dashes ys={[134]} c="#24a07c" dash="3 3" />
          <Candles />
          <Series pts={EMA300} c="#7a7a7a" />
          <Series pts={EMA220} c="#ad86ea" />
          <Series pts={EMA180} c="#e8620c" />
          <Series pts={EMA120} c="#00dfe0" />
          <Series pts={EMA80} c="#ef9c9c" />
          <Series pts={EMA60} c="#b4d97c" />
          <Series pts={EMA30} c="#2b9fd8" />
          <Series pts={EMA15} c="#d43fa8" />
          <Series pts={EMA10} c="#f3e517" />
          <Series pts={EMA7.map(([x, y]): Pt => [x, y + 2])} c="#8d8d8d" />
          <Series pts={EMA7} c="#c4c4c4" />
          <Series pts={UB} c="#e0cf1e" />
          <Series pts={LB} c="#c93ca0" />
          {LEVELS.map((y) => (
            <circle key={y} cx={1714} cy={y} r={3.6} fill="#8a5f14" />
          ))}
          <Arrow points="1474.6,34.7 1392.7,112.7 1394.6,115.7 1377.5,119.3 1382,106 1387.7,108.3" />
        </ChartSvg>
        <PriceMark $x={318} $y={183} $c="#c4c6ca">
          ← 2312.62
        </PriceMark>
        <PriceMark $x={826} $y={47} $c="#6f6f6f">
          2768.88 →
        </PriceMark>
        <Legend $pad={1}>
          <LegendRow $h={18}>
            <Toggler />
            <QuoteName>ETH/USDT永续</QuoteName>
            <QuoteName>2025-06-07 00:00</QuoteName>
            <QuoteLabel>开</QuoteLabel>
            <QuoteValue>2508.28</QuoteValue>
            <QuoteLabel>高</QuoteLabel>
            <QuoteValue>2513.11</QuoteValue>
            <QuoteLabel>低</QuoteLabel>
            <QuoteValue>2506.67</QuoteValue>
            <QuoteLabel>收</QuoteLabel>
            <QuoteValue>2510.62</QuoteValue>
            <QuoteLabel>张幅</QuoteLabel>
            <QuoteValue>0.09%(2.33)</QuoteValue>
            <QuoteLabel>振幅</QuoteLabel>
            <QuoteValue>0.26%</QuoteValue>
          </LegendRow>
          <IndicatorLegend
            gap={9}
            name="BOLL(10,2)"
            values={[
              ["BOLL:2514.17", "#c4c4c4", true],
              ["UB:2642.50", "#f3e517", true],
              ["LB:2385.84", "#d43fa8"],
            ]}
          />
          <IndicatorLegend
            gap={9}
            hidden
            name="EMA"
            values={[
              ["EMA(7):2502.73", "#c4c4c4", true],
              ["EMA(10):2514.16", "#f3e517", true],
              ["EMA(15):2529.66", "#d43fa8"],
              ["EMA(30):2550.92", "#2b9fd8"],
              ["EMA(60):2560.80", "#a7cf7a"],
              ["EMA(80):2554.83", "#e88d8d"],
              ["EMA(120):2520.89", "#00d5d9"],
              ["EMA(180):2448.81", "#d85f0a"],
              ["EMA(220):2402.37", "#a78be6"],
              ["EMA(300):2316.79", "#777777"],
            ]}
          />
        </Legend>
      </ChartArea>
      <PriceAxis>
        {MAIN_TICKS.map((t, i) => (t ? <Tick key={t} $y={Math.round(MAIN_GRID_Y[i]) - 6}>{t}</Tick> : null))}
        <LastPrice $y={128}>2510.62</LastPrice>
      </PriceAxis>
    </PaneRow>

    <PaneRow $h={141}>
      <ChartArea>
        <ChartSvg viewBox="0 324 1720 140" preserveAspectRatio="none">
          <Grid top={324} bottom={464} ys={[345, 383, 421, 459]} />
          <MacdBars />
          <Series pts={DIF} c="#b4b4b4" />
          <Series pts={DEA} c="#e8d81c" />
          <Arrow points="1457.4,348.3 1394,424 1396.4,426.7 1380.4,432.7 1384.9,416 1389.7,421.7" />
        </ChartSvg>
        <PaneHandle />
        <Legend $pad={-1}>
          <IndicatorLegend
            name="MACD(12,26,9)"
            values={[
              ["DIF:-26.12", "#c4c4c4", true],
              ["DEA:-14.74", "#f3e517", true],
              ["MACD:-22.75", "#a83232"],
            ]}
          />
        </Legend>
      </ChartArea>
      <PriceAxis>
        <Tick $y={21}>100.00</Tick>
        <Tick $y={59}>50.00</Tick>
        <Tick $y={97}>0.00</Tick>
      </PriceAxis>
    </PaneRow>

    <PaneRow $h={142}>
      <ChartArea>
        <ChartSvg viewBox="0 465 1720 141" preserveAspectRatio="none">
          <rect x={0} y={506} width={1720} height={67} fill="#2f0c35" />
          <Grid top={465} bottom={606} ys={[489, 522, 556, 589]} />
          <Dashes ys={[506, 573]} c="#666666" />
          <Series pts={RSI1} c="#b4b4b4" />
          <Series pts={RSI3} c="#d43fa8" />
          <Series pts={RSI2} c="#e8d81c" />
        </ChartSvg>
        <Legend $pad={-1}>
          <IndicatorLegend
            name="RSI(6,12,24)"
            values={[
              ["RSI1:47.36", "#c4c4c4", true],
              ["RSI2:44.35", "#f3e517", true],
              ["RSI3:45.75", "#d43fa8"],
            ]}
          />
        </Legend>
      </ChartArea>
      <PriceAxis>
        <Tick $y={24}>80.00</Tick>
        <Tick $y={41}>70.00</Tick>
        <Tick $y={57}>60.00</Tick>
        <Tick $y={91}>40.00</Tick>
        <Tick $y={108}>30.00</Tick>
        <Tick $y={124}>20.00</Tick>
      </PriceAxis>
    </PaneRow>

    <PaneRow $h={142}>
      <ChartArea>
        <ChartSvg viewBox="0 607 1720 141" preserveAspectRatio="none">
          <Grid top={607} bottom={748} ys={[630, 684, 738]} />
          <Dashes ys={[652, 684, 716]} c="#5c5c5c" />
          <Series pts={KDJ_J} c="#d43fa8" />
          <Series pts={KDJ_K} c="#b4b4b4" />
          <Series pts={KDJ_D} c="#e8d81c" />
        </ChartSvg>
        <Legend $pad={-1}>
          <IndicatorLegend
            name="KDJ(9,3,3)"
            values={[
              ["K:40.53", "#c4c4c4", true],
              ["D:34.19", "#f3e517", true],
              ["J:53.20", "#d43fa8"],
            ]}
          />
        </Legend>
      </ChartArea>
      <PriceAxis>
        <Tick $y={22}>100.00</Tick>
        <Tick $y={76}>50.00</Tick>
        <Tick $y={130}>0.00</Tick>
      </PriceAxis>
    </PaneRow>

    <TimeRow>
      <TimeScale>
        {TIME_LABELS.map((t) => (
          <span key={t}>{t}</span>
        ))}
      </TimeScale>
      <ScaleCorner>
        <span>筹</span>
        <span>爆</span>
      </ScaleCorner>
    </TimeRow>

    <Toolbar>
      <AlertDot />
      <LocateIcon viewBox="0 0 14 14" fill="none" stroke="#8b8f96" strokeWidth="1">
        <path d="M2 5V1.5h9V5M2 5v7.5h5M4 0.5v2M9 0.5v2M6 8.5h7M10.5 6.5l2.5 2-2.5 2" />
      </LocateIcon>
      <StrongLabel>定位到...</StrongLabel>
      <Divider $l={13} $r={20} />
      <StrongLabel>日期范围</StrongLabel>
      <RangeCaret size={12} />
      <Divider $l={15} $r={10} />
      <ToolGroup $gap={13}>
        <ToolItem $on>BOLL</ToolItem>
        <ToolItem $on>EMA</ToolItem>
        <ToolItem>Alligator</ToolItem>
        <ToolItem>MA</ToolItem>
        <ToolItem>DC</ToolItem>
        <ToolItem>KC</ToolItem>
      </ToolGroup>
      <Divider $l={24} $r={12} />
      <ToolGroup $gap={12}>
        <ToolItem>EMA</ToolItem>
        <ToolItem $on>KDJ</ToolItem>
        <ToolItem $on>MACD</ToolItem>
        <ToolItem>OBV</ToolItem>
        <ToolItem>ATR</ToolItem>
        <ToolItem $on>RSI</ToolItem>
      </ToolGroup>
      <CommunityLink>
        <SquareArrowOutUpRight size={11} strokeWidth={1.2} />
        社区指标
      </CommunityLink>
      <ToolEnd>
        <ToolItem>对数</ToolItem>
        <ToolItem>%</ToolItem>
        <ToolItem $on>自动</ToolItem>
      </ToolEnd>
    </Toolbar>

    <BottomStrip>
      {[6, 4, 6, 6].map((w, i) => (
        <Speck key={i} $w={w} />
      ))}
      <Speck $on $w={32} />
      {[8, 6, 10, 6, 8, 6, 10, 8, 6, 10, 8, 6, 10, 6, 8, 10].map((w, i) => (
        <Speck key={i} $w={w} />
      ))}
    </BottomStrip>
  </Page>
);

export default App;
